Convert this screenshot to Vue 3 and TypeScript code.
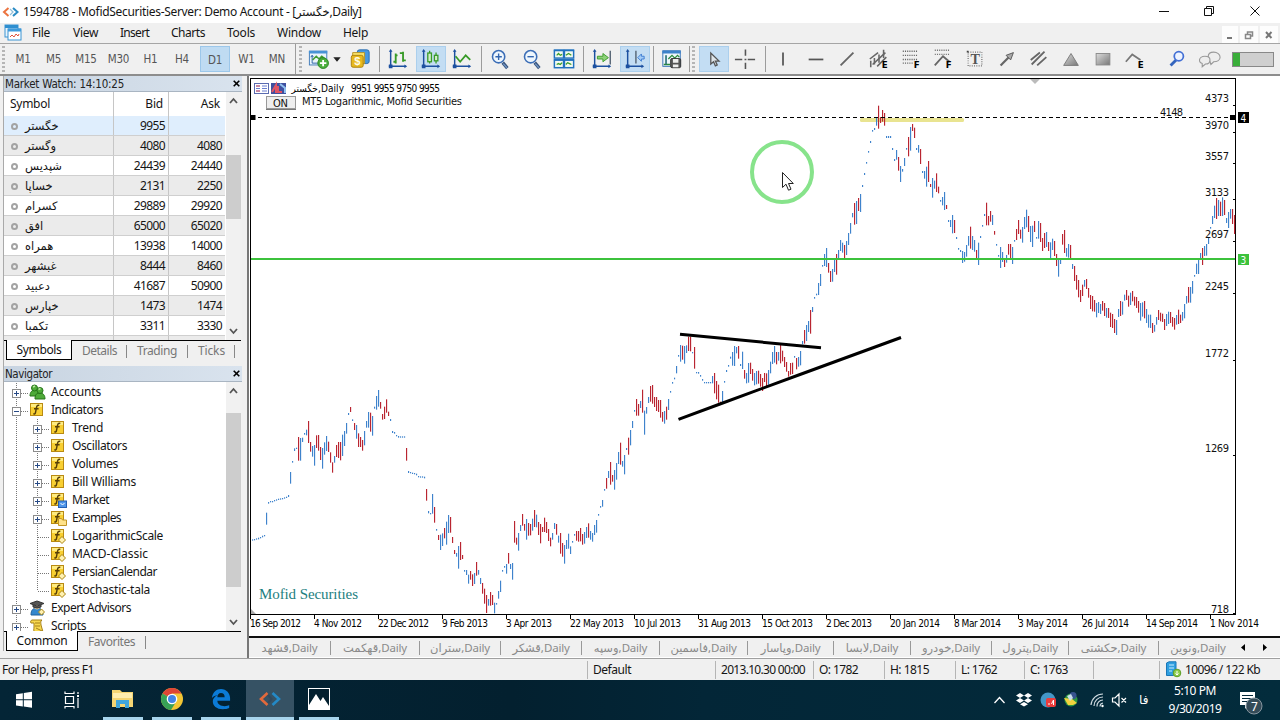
<script setup lang="ts">
interface Run { x: number; y: number; bars: string }
interface Bar { x: number; y: number; h: number; up: boolean }

// Adjusts letter spacing so that a label takes the given width in pixels.
const vFit = {
  mounted(el: HTMLElement, binding: { value: number }) {
    const n = (el.textContent || '').length
    if (!binding.value || !n) return
    const w = el.getBoundingClientRect().width
    el.style.letterSpacing = ((binding.value - w) / n).toFixed(3) + 'px'
  },
}

// Daily bars, one every 2px; heights are in thirds of a pixel below each run's y.
const runs: Run[] = [
  { x: 252, y: 380, bars: 'b478-482 b477-481 b475-479 b473-478 b471-475 b467-472 b465-469 b398-434 b366-371 b363-367 b363-367 b360-364 b358-362 b356-360 b355-359 b354-358 b352-356 b350-354 b345-351 b276-311 b243-248 b205-213 b203-207 r171-242 b174-242 b173-186 b159-164 b149-166 r123-189 r186-215 b198-230 b195-257 r166-204 r165-212 r201-240 b204-266 b187-224 b168-213 r185-216 r217-248 r247-278 b228-248 r195-231 r186-234 r186-241 b164-228 b153-198 b129-161 b99-105 r81-96 b118-123 r129-150 b135-176 r160-201 r171-201 r180-212 b153-196 b123-143 b96-143 r98-155 b108-167 b80-86 b48-89 b30-80 r66-86 r102-119 r80-117 r58-98 r95-108 b117-123 b153-159 b156-161 b165-169 b168-173 b169-173 b169-173 b169-173 r204-242 b273-279 b276-280 b278-282 b279-283 b281-286 b288-292 b289-293 b289-293 b290-295 r327-362 b393-400 b399-403 b342-401 r381-428 b447-452 r465-480 b464-510 b460-498 r444-475 b425-494 b405-459 r411-458 r471-489 r510-522 b519-530 b498-566 r486-540 r525-537 b570-575 b570-585 b584-611 r573-599 r583-618 b579-612 r546-587 b570-584 b594-612 r609-641 r626-671 r645-699 b657-677 r636-677 r645-675 b668-700 b669-674 b633-656 b602-636 b570-575 b558-563' },
  { x: 506, y: 380, bars: 'b552-581 r519-551 b552-567 b549-599 r423-488 r473-494 b459-512 b435-453 r402-437 r432-452 b417-479 r429-467 r432-466 b416-452 r390-441 b404-442 r426-465 r432-490 r441-456 r413-456 r426-459 r447-483 r473-499 b459-479 b429-447 r432-464 b467-488 r459-521 r489-530 b495-551 b480-507 b461-506 b499-522 b483-488 b462-467 r453-482 r453-485 r444-484 r462-494 b456-491 b441-474 r430-473 b453-479 b459-485 b435-465 b420-458 b402-407 b378-383 b360-380 b327-332 r294-326 b273-294 r246-314 r285-305 b270-329 b249-299 b216-252 r188-254 b243-260 b225-283 b204-210 r173-224 b150-196 b123-144 b90-95 r57-107 r72-107 b63-84 r29-98 b92-164 b81-101 b51-69 r18-65 r15-71 r51-81 r51-93 r60-96 r60-113 r96-125 b93-131 r80-119 b57-90 b33-38' },
  { x: 672, y: 230, bars: 'b456-461 b443-448 b408-430 b375-380 b345-395 r347-389 b348-401 b346-369 r320-363 r320-364 b366-370 r351-416 b426-430 b426-431 b435-440 b447-452 b456-460 b456-460 b456-460 b456-460 b438-460 r429-490 r453-508 r464-518 r515-521 b483-517 b453-458 b420-426 b405-410 b380-386 b366-407 b348-408 b351-370 r348-386 b402-408 b365-417 r420-446 b429-460 b399-458 r398-432 r417-452 b429-466 b423-463 r422-461 r432-470 r444-483 r429-456 r430-468 b420-464 b395-430 b366-402 b348-398 r366-403 b366-392 r342-400 r362-394 r381-411 r396-425 r423-440 r399-434 r398-432 b378-383 r384-418 b381-410 b363-406 b333-343 r300-341 b285-333 b273-306 r240-311 b231-246 b201-206 b191-196 b159-195 b132-168 b105-110 b72-108 b54-111 r99-128 r123-156 b117-155 b90-126 r72-134 b60-89' },
  { x: 840, y: 90, bars: 'b450-483 b458-488 r465-507 b453-495 b429-465 b399-431 b369-382 r339-404 b333-402 r324-363 b312-366 b285-291 b249-255 b216-221 b183-188 b153-159 b120-125 b114-120 b83-107 r47-116 r81-99 r60-95 r69-107 b138-144 b138-144 b138-144 b174-180 b207-213 b180-209 r201-242 b228-276 b237-245 b204-228 b174-179 r141-199 b111-182 r102-123 r113-144 b174-180 b165-188 r177-222 b243-249 b243-266 b230-290 r213-276 r282-291 b264-323 b272-296 r250-306 r290-310 b330-335 b321-346 b306-360 r345-357 b390-396 b390-411 b375-430 r390-429 b441-447 b474-479 b480-486 b483-519 b486-515 b465-500 b438-467 r410-476 b438-480 b450-485 r480-506 b458-525 b438-444 b405-410 b372-378 r338-406 r378-406 r363-395 b375-405 r423-434 b462-467 b495-500 b471-534 b486-516 r507-531 b495-518 r462-494 r462-505 b471-522 b450-455 r417-450 r390-432 r419-446 b411-458 b381-417 b359-412 r378-426 b408-456 b407-471 r393-426 b441-446 b393-446' },
  { x: 1040, y: 90, bars: 'r399-456 r444-483 r429-474 b426-471 r456-483 b457-506 b446-480 r453-498 r492-528 b507-560 b509-522 r432-464 r420-489 b474-500 b462-503 r465-507 b522-537 r528-573 r555-599 r570-622 r600-636 r584-618 b570-590 r567-597 r594-623 r615-657 r618-664 r630-665 b639-682 b636-669 b642-672 r633-662 r639-678 b654-683 r654-684 r668-711 r672-714 r687-729 b690-735 b657-681 r633-678 b635-674 b614-632 r600-630 r617-650 b608-645 r603-634 r620-647 r621-654 r633-668 b639-692 b637-680 r633-685 b657-699 b674-713 b674-714 r699-729 b705-725 b681-704 r660-690 r668-694 r671-696 r687-720 b672-708 b665-702 r666-699 r681-710 r684-719 b675-704 r659-702 r674-699 b666-692 b642-685 b618-641 r591-638 b591-638 b573-611 b555-560 b521-552 b507-552 b489-507 r474-525 b468-498 b462-497 b443-462 b411-416 b378-402 b347-384 r324-387 b330-378 r335-378 b322-378 r330-375 b384-399 b366-414 b357-386 r357-402 r375-432' },
]
const bars: Bar[] = runs.flatMap((run) =>
  run.bars.split(' ').map((code, i) => {
    const [top, bottom] = code.slice(1).split('-').map(Number)
    return { x: run.x + 2 * i, y: run.y + top / 3, h: (bottom - top) / 3, up: code[0] === 'b' }
  }),
)

const dates: [number, string, number][] = [
  [250, '16 Sep 2012', 51], [314, '4 Nov 2012', 48], [378, '22 Dec 2012', 51], [442, '9 Feb 2013', 46],
  [506, '3 Apr 2013', 46], [570, '22 May 2013', 54], [634, '10 Jul 2013', 47], [698, '31 Aug 2013', 53],
  [762, '15 Oct 2013', 51], [826, '2 Dec 2013', 46], [890, '20 Jan 2014', 50], [954, '8 Mar 2014', 47],
  [1018, '3 May 2014', 50], [1082, '26 Jul 2014', 47], [1146, '14 Sep 2014', 52], [1210, '1 Nov 2014', 49],
]
const prices: [number, string][] = [
  [98, '4373'], [125, '3970'], [156, '3557'], [192, '3133'], [234, '2697'], [286, '2245'], [353, '1772'], [448, '1269'], [609, '718'],
]

const menus: [string, number, number][] = [
  ['File', 18, 40], ['View', 25, 47], ['Insert', 29, 51], ['Charts', 34, 56], ['Tools', 28, 50], ['Window', 44, 66], ['Help', 25, 50],
]
const frames: [string, number][] = [
  ['M1', 30], ['M5', 31], ['M15', 34], ['M30', 31], ['H1', 33], ['H4', 30], ['D1', 30], ['W1', 31], ['MN', 30],
]

interface Tool { k: string; w: number; on?: boolean }
const tools: Tool[] = [
  { k: 'newchart', w: 28 }, { k: 'drop', w: 8 }, { k: 'money', w: 38 }, { k: '|', w: 1 },
  { k: 'bars', w: 36 }, { k: 'candles', w: 30, on: true }, { k: 'line', w: 32 }, { k: '', w: 3 }, { k: '|', w: 1 },
  { k: 'zoomin', w: 35 }, { k: 'zoomout', w: 30 }, { k: 'tile', w: 34 }, { k: '', w: 2 }, { k: '|', w: 1 },
  { k: 'scroll', w: 36 }, { k: 'shift', w: 30, on: true }, { k: '', w: 3 }, { k: '|', w: 1 },
  { k: 'template', w: 35 }, { k: '|', w: 1 }, { k: ':', w: 8 }, { k: '', w: 1 },
  { k: 'cursor', w: 30, on: true }, { k: 'cross', w: 32 }, { k: '', w: 4 }, { k: '|', w: 1 },
  { k: 'vline', w: 34 }, { k: 'hline', w: 31 }, { k: 'trend', w: 32 }, { k: 'channel', w: 32 }, { k: 'fibo', w: 32 },
  { k: 'fan', w: 32 }, { k: 'text', w: 32 }, { k: 'arrow', w: 32 }, { k: 'lines', w: 31 }, { k: 'tri', w: 33 },
  { k: 'rect', w: 32 }, { k: 'elliott', w: 32 }, { k: '', w: 8 }, { k: 'search', w: 36 }, { k: 'chat', w: 30 },
]

const axis = '<g fill="none" stroke="#1c50a0" stroke-width="1.6"><path d="M4 3v17M2 20h18"/></g><path d="M4 1l2 3h-4zM22 20l-3-2v4zM2 18h4v4h-4z" fill="#1c50a0"/>'
const lens = '<path d="M15 16l5 6" stroke="#39537b" stroke-width="3.6"/><path d="M15.500 17l4 4.500" stroke="#7196c5" stroke-width="1.500"/><circle cx="10.500" cy="9.500" r="6.700" fill="#eef6fd" stroke="#3c6eb7" stroke-width="1.700"/>'
const letter = (c: string) => `<text x="15" y="21.500" font-family="DejaVu Sans" font-weight="700" font-size="9.500" fill="#000">${c}</text>`
const icons: Record<string, string> = {
  newchart: '<rect x="1.500" y="3.500" width="19" height="15" fill="#eaf4fb" stroke="#3c78b8"/><path d="M1 3h20v3H1z" fill="#4793d5"/><path d="M4.500 8v8.500H15M3 10l1.500-2 1.500 2" fill="none" stroke="#235ca2"/><path d="M5 13l4-4 3 3 3-3 4 3" fill="none" stroke="#3e9a30" stroke-width="1.600"/><circle cx="16.500" cy="16.500" r="5.800" fill="#4cae3d" stroke="#26861f"/><path d="M16.500 13v7M13 16.500h7" stroke="#fff" stroke-width="2"/>',
  drop: '<path d="M8 10h8l-4 5z" fill="#222"/>',
  money: '<rect x="9" y="2" width="13" height="15" rx="2.500" fill="#4799e1" stroke="#276aac"/><path d="M4 5h13v12H4z" fill="#fbe46a" stroke="#b69220"/><rect x="2.500" y="8" width="13" height="13" rx="2" fill="#e7b91f" stroke="#a77d0b"/><text x="5.800" y="19" font-family="Liberation Sans" font-weight="700" font-size="12" fill="#fffbe5">$</text>',
  bars: axis + '<path d="M9.500 6v11M7 15h2.500M9.500 8h2M17.500 4v11M14 5.500h3.500M17.500 13.500h3" fill="none" stroke="#379a26" stroke-width="2"/>',
  candles: axis + '<g stroke="#379a26" stroke-width="1.400" fill="#d3edc9"><path d="M10.500 3v14M17.500 5v12"/><rect x="8.500" y="5.500" width="4" height="9.500"/><rect x="15.700" y="8" width="3.800" height="6"/></g>',
  line: axis + '<path d="M5 9l5 6 6-7 5 5" fill="none" stroke="#379a26" stroke-width="1.900"/>',
  zoomin: lens + '<path d="M10.500 6v7M7 9.500h7" stroke="#3265af" stroke-width="1.500"/>',
  zoomout: lens + '<path d="M7 9.500h7" stroke="#3265af" stroke-width="1.500"/>',
  tile: '<g fill="#f2faf1" stroke="#2172bf" stroke-width="1.600"><rect x="1.500" y="2.500" width="10" height="8.500"/><rect x="12.500" y="2.500" width="10" height="8.500"/><rect x="1.500" y="13" width="10" height="8.500"/><rect x="12.500" y="13" width="10" height="8.500"/></g><path d="M1 2.500h22M1 13h22" stroke="#2172bf" stroke-width="2"/><path d="M4 8l2-2 2 2 2-1M14 8l3-2 3 2M4 18l2-1 2 1 2-2M14 18l2-2 2 1 2 1" fill="none" stroke="#399e2c" stroke-width="1.400"/>',
  scroll: axis + '<path d="M21 3v15" stroke="#526170" stroke-width="1.500"/><path d="M7 9h6V6l6 4.500-6 4.500v-3H7z" fill="#8dd078" stroke="#3a9b2a"/>',
  shift: axis + '<path d="M13 3v14" stroke="#526170" stroke-width="1.500"/><path d="M22 9h-3V6.500L15 10.500l4 4V12h3z" fill="#a3cdf7" stroke="#3b79d0"/>',
  template: '<rect x="2" y="3" width="19" height="17" fill="#eff6fc" stroke="#2f6fb5"/><path d="M1.500 3h20v3h-20z" fill="#3c82ca"/><path d="M5.500 8v10M3 18h7M8 12l4-4 3 3 3-3 2 2" fill="none" stroke="#2b8b3b" stroke-width="1.400"/><path d="M5.500 8v10" stroke="#235ca2"/><rect x="10.500" y="11.500" width="11" height="10" rx="1.500" fill="#555" stroke="#333"/><path d="M13 12h6v4h-6zM13 18h6v3h-6z" fill="#eee"/>',
  cursor: '<path d="M8.500 5.500v12l3-2.500 2 4.500 2-1-2-4.300h4z" fill="#dfe5e9" stroke="#555" stroke-width="1.400"/>',
  cross: '<path d="M1 12.500h8M15 12.500h8M12.500 1.500v7M12.500 16v7M11.500 12.500h2" stroke="#555" stroke-width="1.700"/>',
  vline: '<path d="M12 5v14" stroke="#555" stroke-width="1.900"/>',
  hline: '<path d="M4 12.500h16" stroke="#555" stroke-width="1.900"/>',
  trend: '<path d="M5 19L19 5" stroke="#666" stroke-width="2"/>',
  channel: '<g stroke="#666" stroke-width="1.700"><path d="M2 12l9-7M5 18L19 5M10 20l10-10"/><path d="M3 14v7M7 11v7M12 7v9M17 2v9"/></g>' + letter('E'),
  fibo: '<path d="M3 3.500h16M3 8h16M3 12.500h16M3 16.500h12" stroke="#666" stroke-width="1.500" stroke-dasharray="1.200 1.200"/>' + letter('F'),
  fan: '<path d="M3 2.500h16M3 7h16" stroke="#777" stroke-width="1.500" stroke-dasharray="1.200 1.200"/><path d="M3 19L12 9l7 6" fill="none" stroke="#666" stroke-width="2"/>' + letter('F'),
  text: '<rect x="4.500" y="4.500" width="15" height="15" fill="none" stroke="#666" stroke-width="1.200" stroke-dasharray="1 1.500"/><path d="M3 3h2v2H3z" fill="#444"/><text x="7" y="17.500" font-family="Liberation Serif" font-weight="700" font-size="15.500" fill="#555">T</text>',
  arrow: '<path d="M5 19l10-10" stroke="#666" stroke-width="2.400"/><path d="M11 8l8-3-3 8z" fill="#aaa" stroke="#555"/>',
  lines: '<path d="M3 13l10-8M4 18L18 4M10 19l10-9" stroke="#666" stroke-width="2"/>',
  tri: '<path d="M4 19l8-13 8 13z" fill="url(#steel)" stroke="#777"/>',
  rect: '<rect x="4.500" y="6" width="15" height="12.500" fill="url(#steel)" stroke="#888"/>',
  elliott: '<path d="M2 15l7-8 9 6" fill="none" stroke="#777" stroke-width="1.900"/>' + letter('E'),
  search: '<path d="M5 19l6-6" stroke="#3565bd" stroke-width="3.200"/><circle cx="14" cy="9" r="5" fill="#edf3ff" stroke="#426fd5" stroke-width="1.900"/>',
  chat: '<g fill="#ededed" stroke="#999" stroke-width="1.200"><path d="M12 15l1 3 3-3c4 0 7-2 7-5s-3-5.500-7-5.500-6 2-6 5 1 4.500 2 5.500z"/><path d="M6.500 9c3 0 5.500 1.500 5.500 4s-2 4.500-5 4.500l-3.500 3v-3.500c-2-.8-3-2-3-3.500C.5 11 3 9 6.500 9z"/></g>',
}

const symbols: [string, string, string][] = [
  ['خگستر', '9955', ''], ['وگستر', '4080', '4080'], ['شپدیس', '24439', '24440'], ['خساپا', '2131', '2250'],
  ['کسرام', '29889', '29920'], ['افق', '65000', '65020'], ['همراه', '13938', '14000'], ['غبشهر', '8444', '8460'],
  ['دعبید', '41687', '50900'], ['خپارس', '1473', '1474'], ['تکمبا', '3311', '3330'],
]

interface Node { t: string; w: number; lv: number; box: string; icon: string }
const tree: Node[] = [
  { t: 'Accounts', w: 50, lv: 0, box: '+', icon: 'people' },
  { t: 'Indicators', w: 52, lv: 0, box: '-', icon: 'f' },
  { t: 'Trend', w: 31, lv: 1, box: '+', icon: 'f' },
  { t: 'Oscillators', w: 55, lv: 1, box: '+', icon: 'f' },
  { t: 'Volumes', w: 46, lv: 1, box: '+', icon: 'f' },
  { t: 'Bill Williams', w: 64, lv: 1, box: '+', icon: 'f' },
  { t: 'Market', w: 37, lv: 1, box: '+', icon: 'fm' },
  { t: 'Examples', w: 49, lv: 1, box: '+', icon: 'fe' },
  { t: 'LogarithmicScale', w: 91, lv: 1, box: '', icon: 'fd' },
  { t: 'MACD-Classic', w: 76, lv: 1, box: '', icon: 'fd' },
  { t: 'PersianCalendar', w: 85, lv: 1, box: '', icon: 'fd' },
  { t: 'Stochastic-tala', w: 78, lv: 1, box: '', icon: 'fd' },
  { t: 'Expert Advisors', w: 80, lv: 0, box: '+', icon: 'expert' },
  { t: 'Scripts', w: 35, lv: 0, box: '+', icon: 'script' },
]
const fBase = '<rect x="1.500" y="1.500" width="12" height="12" fill="#f8cf32" stroke="#b98a12"/><path d="M2 2h11v3H2z" fill="#ffec81"/><path d="M10.300 3.500c-2-.8-2.600.7-2.900 2.500l-.9 4.500c-.3 1.400-1 1.800-2.200 1.200M5 6.700h4.600" fill="none" stroke="#573f08" stroke-width="1.400"/>'
const treeIcons: Record<string, string> = {
  f: fBase,
  fm: fBase + '<rect x="8.500" y="9" width="8" height="6.500" fill="#5097ea" stroke="#2460b4"/><path d="M10.500 11l2 2 2-2" fill="none" stroke="#fff"/>',
  fe: fBase + '<path d="M8.500 8.500h3l1 1.500h4v5.500h-8z" fill="#ffe28a" stroke="#c29525"/>',
  fd: fBase + '<path d="M12 8.500l3.500 3.500-3.500 3.500L8.500 12z" fill="#fff1b2" stroke="#ab8510"/>',
  people: '<g fill="#4eaa39" stroke="#267519"><path d="M1 12c0-4 2-6 5-6s5 2 5 6z"/><circle cx="5.500" cy="4" r="3"/><path d="M6 15c0-5 2-6 5-6s5 2 5 6z"/><circle cx="11" cy="6.500" r="3"/></g><path d="M4 3l2-1M9.500 5.500l2-1" stroke="#b7e79f" stroke-width="1.500"/>',
  expert: '<path d="M2 15c0-5 2-7 6-7s6 2 6 7z" fill="#3487ce" stroke="#20609d"/><circle cx="8" cy="6.500" r="3" fill="#dcc193"/><path d="M1 3.500L8 1l7 2.500L8 6zM4 5v2l4 1 4-1V5" fill="#555" stroke="#333"/><path d="M12.500 9l3 3-3 3-3-3z" fill="#fff1b2" stroke="#ab8510"/>',
  script: '<path d="M3 2h10c-2 1-1 3-1 5l2 7H6c-2-1-1-3-1-5V5H2c-1-1 0-3 1-3z" fill="#f8d84e" stroke="#a58019"/><path d="M6 5h5M6 8h5M7 10l6 3" stroke="#a58019"/>',
}

const chartTabs: [string, number][] = [
  ['قشهد', 82], ['قهکمت', 89], ['ستران', 81], ['قشکر', 81], ['وسپه', 78], ['فاسمین', 88], ['وپاسار', 86], ['لابسا', 77],
  ['خودرو', 81], ['پترول', 77], ['حکشتی', 90], ['ونوین', 78],
]
const status: [string, number, number][] = [
  ['Default', 128, 38], ['2013.10.30 00:00', 98, 84], ['O: 1782', 71, 39], ['H: 1815', 71, 39], ['L: 1762', 69, 36], ['C: 1763', 69, 38], ['', 66, 0],
]
</script>

<template>
  <div class="desk">
    <svg class="defs" width="0" height="0"><defs><linearGradient id="steel" x1="0" y1="0" x2="1" y2="1"><stop offset="0" stop-color="#ddd" /><stop offset="1" stop-color="#777" /></linearGradient></defs></svg>
    <header class="title">
      <svg class="brand" width="18" height="16" viewBox="0 0 18 16" fill="none" stroke-width="2"><path d="M6.500 4L2 8l4.500 4" stroke="#ec7440" /><path d="M11 4l4.500 4-4.500 4" stroke="#2a8bc4" /><path d="M8 5l3 3-3 3" stroke="#91bfd9" stroke-width="1.200" /></svg>
      <span class="cap"><span v-fit="273">1594788 - MofidSecurities-Server: Demo Account - [</span><span class="fa">خگستر</span><span v-fit="32">,Daily]</span></span>
      <svg class="winbtns" width="110" height="20" viewBox="0 0 110 20" fill="none" stroke="#111"><path d="M5 9.500h10M50.500 6.500h7v7h-7zM52.500 6.500v-2h7v7h-2M96.500 4.500l9 9M105.500 4.500l-9 9" /></svg>
    </header>
    <nav class="menu">
      <svg class="docicon" width="18" height="18" viewBox="0 0 18 18"><rect x="1" y="1" width="13" height="12" fill="#e8f4fc" stroke="#3b94d2" /><path d="M1 1h13v3H1z" fill="#2e8fd0" /><rect x="4" y="5" width="13" height="11" fill="#fff" stroke="#3b94d2" /><path d="M4 4.500h13v3H4z" fill="#3f9bdb" /><path d="M6 13l2-2 2 2 2-3 2 2 1-2" fill="none" stroke="#e0523a" /></svg>
      <span v-for="m in menus" :key="m[0]" class="mi" :style="{ width: m[2] + 'px' }"><span v-fit="m[1]">{{ m[0] }}</span></span>
      <svg class="mdibtns" width="56" height="17" viewBox="0 0 56 17"><path d="M0 0h16v17H0zM18 0h18v17H18zM38 0h18v17H38z" fill="#fdfdfd" /><path d="M5 12h5" stroke="#777" stroke-width="2" /><path d="M23.500 8.500h5v4h-5zM25.500 8v-2h5v4h-2" fill="none" stroke="#888" stroke-width="1.500" /><path d="M44 6l5.500 6M49.500 6l-5.500 6" stroke="#777" stroke-width="2" /></svg>
    </nav>
    <div class="toolbar">
      <i class="grip first"></i>
      <span v-for="f in frames" :key="f[0]" class="tf" :class="{ on: f[0] === 'D1' }" :style="{ width: f[1] + 'px' }"><b>{{ f[0] }}</b></span>
      <i class="sep end"></i><i class="grip"></i>
      <template v-for="(t, i) in tools" :key="i">
        <i v-if="t.k === '|'" class="sep"></i>
        <i v-else-if="t.k === ':'" class="grip mid"></i>
        <span v-else class="tool" :class="{ on: t.on }" :style="{ width: t.w + 'px' }"><svg v-if="t.k" width="22" height="22" viewBox="0 0 24 24" v-html="icons[t.k]"></svg></span>
      </template>
      <span class="meter"><i></i></span>
    </div>

    <main class="work">
      <aside class="side">
        <section class="panel watch">
          <h2><span v-fit="119">Market Watch: 14:10:25</span><svg width="7" height="7" viewBox="0 0 7 7"><path d="M.7.7l5.600 5.600M6.300.7L.7 6.300" stroke="#000" stroke-width="1.600" /></svg></h2>
          <div class="body">
            <div class="table">
              <div class="tr th"><span class="c1"><span v-fit="40">Symbol</span></span><span class="c2">Bid</span><span class="c3">Ask</span></div>
              <div v-for="(s, i) in symbols" :key="s[0]" class="tr" :class="{ odd: i % 2, sel: i === 0 }">
                <span class="c1"><i class="dot"></i><span class="fa">{{ s[0] }}</span></span><span class="c2">{{ s[1] }}</span><span class="c3">{{ s[2] }}</span>
              </div>
              <div class="tr odd"><span class="c1"></span><span class="c2"></span><span class="c3"></span></div>
            </div>
            <div class="scroll"><svg viewBox="0 0 15 10"><path d="M4 7l3.500-4L11 7" /></svg><i class="thumb t1"></i><svg viewBox="0 0 15 10"><path d="M4 3l3.500 4L11 3" /></svg></div>
          </div>
          <div class="tabs"><span class="cur s"><span v-fit="45">Symbols</span></span><span class="tab a"><span v-fit="35">Details</span></span><span class="tab b"><span v-fit="40">Trading</span></span><span class="tab c"><span v-fit="27">Ticks</span></span></div>
        </section>
        <section class="panel nav">
          <h2><span v-fit="47">Navigator</span><svg width="7" height="7" viewBox="0 0 7 7"><path d="M.7.7l5.600 5.600M6.300.7L.7 6.300" stroke="#000" stroke-width="1.600" /></svg></h2>
          <div class="body">
            <div class="tree">
              <div v-for="(n, i) in tree" :key="n.t" class="node">
                <svg class="rail" :width="n.lv ? 46 : 25" height="18" :viewBox="n.lv ? '0 0 46 18' : '0 0 25 18'">
                  <g fill="none" stroke="#777" stroke-dasharray="1 1"><path d="M12.500 0v18" /><path v-if="n.lv" :d="i === 11 ? 'M33.500 0v10' : 'M33.500 0v18'" /><path :d="n.lv ? 'M34 10.500h11' : 'M13 10.500h11'" /></g>
                  <g v-if="n.box" fill="none"><rect :x="n.lv ? 29.5 : 8.5" y="6.500" width="8" height="8" fill="#fff" stroke="#8c8c8c" /><path :d="n.lv ? 'M31 10.500h5' : 'M10 10.500h5'" stroke="#274a86" /><path v-if="n.box === '+'" :d="n.lv ? 'M33.500 8v5' : 'M12.500 8v5'" stroke="#274a86" /></g>
                </svg>
                <svg class="ni" width="18" height="17" viewBox="0 0 18 17" v-html="treeIcons[n.icon]"></svg>
                <span v-fit="n.w">{{ n.t }}</span>
              </div>
            </div>
            <div class="scroll"><svg viewBox="0 0 15 10"><path d="M4 7l3.500-4L11 7" /></svg><i class="thumb t2"></i><svg viewBox="0 0 15 10"><path d="M4 3l3.500 4L11 3" /></svg></div>
          </div>
          <div class="tabs"><span class="cur n"><span v-fit="51">Common</span></span><span class="tab f"><span v-fit="47">Favorites</span></span></div>
        </section>
      </aside>

      <section class="chartwin">
        <svg class="chart" width="1031" height="559" viewBox="249 77 1031 559">
          <rect x="249" y="77" width="1031" height="559" fill="#fff" />
          <g shape-rendering="crispEdges" fill="#000">
            <rect x="250" y="78" width="986" height="1" /><rect x="250" y="78" width="1" height="536" /><rect x="1235" y="78" width="1" height="537" /><rect x="250" y="614" width="986" height="1" />
            <rect v-for="d in dates" :key="'t' + d[0]" :x="d[0]" y="614" width="1" height="5" />
            <rect v-for="p in prices" :key="'p' + p[0]" x="1233" :y="p[0] === 609 ? 613 : p[0] + 7" width="3" height="1" />
          </g>
          <rect x="860" y="118" width="104" height="4" rx="1.500" fill="#e9e491" />
          <path d="M1030 79h10l-5 5z" fill="#bbb" /><path d="M251 609l5 5h-5z" fill="#aaa" />
          <rect v-for="b in bars" :key="b.x" :x="b.x" :y="b.y" width="1.150" :height="b.h" :fill="b.up ? '#3f83cc' : '#b92531'" />
          <path d="M251 117.500h984" stroke="#000" stroke-dasharray="4 3" />
          <rect x="251" y="258" width="984" height="2" fill="#3cc23c" />
          <path d="M250.500 115h5v5h-5zM1230 115h5v5h-5z" />
          <rect x="1238" y="112" width="11" height="11" /><rect x="1238" y="254" width="11" height="11" fill="#3cc23c" />
          <g class="tah" font-size="10" fill="#fff"><text x="1240.500" y="121.500">4</text><text x="1240.500" y="263.500">3</text></g>
          <path d="M680 334.300L821 347.800M678.500 419.300L720 404 800 374.500 901 337.500" fill="none" stroke="#000" stroke-width="3" stroke-linejoin="round" />
          <circle cx="782" cy="172" r="30" fill="none" stroke="#87e38b" stroke-width="4" />
          <path d="M782.500 172.500v15l3.500-3.300 2.500 6 2.500-1-2.500-5.700h4.800z" fill="#fff" stroke="#222" />
          <g class="tah" font-size="11" fill="#111">
            <text v-for="p in prices" :key="p[1]" :x="p[1] === '718' ? 1211 : 1205" :y="p[0] + 4" :textLength="p[1] === '718' ? 18 : 24">{{ p[1] }}</text>
            <text x="1160" y="115.500" textLength="23">4148</text>
          </g>
          <g class="tah" font-size="10" fill="#000">
            <text v-for="d in dates" :key="d[1]" :x="d[0]" y="627" :textLength="d[2]">{{ d[1] }}</text>
            <text x="291.500" y="92" font-size="10">خگستر</text>
            <text x="318" y="92" textLength="26">,Daily</text><text x="351" y="92" textLength="89">9951 9955 9750 9955</text>
          </g>
          <rect x="266.500" y="96.500" width="29" height="12" fill="#eee" stroke="#999" />
          <path d="M266 109.500h30" stroke="#777" />
          <g class="tah" font-size="11" fill="#111"><text x="273" y="107" textLength="15">ON</text><text x="302" y="105" textLength="160">MT5 Logarithmic, Mofid Securities</text></g>
          <text x="259" y="599" font-family="Liberation Serif, serif" font-size="15" fill="#1d8080" textLength="99">Mofid Securities</text>
          <g><rect x="254.500" y="83.500" width="14" height="10" fill="#fff" stroke="#5a6bb0" /><path d="M256 86h4M262 86h5M256 88.500h4M262 88.500h5M256 91h4M262 91h5" stroke="#6a7fd0" /><path d="M256 86h4M256 91h4" stroke="#d85060" /><rect x="271" y="83" width="15" height="11" fill="#3f4f9f" /><path d="M272 92l4-7v8M278 86v6h4" fill="none" stroke="#e05565" stroke-width="2" /><path d="M280 84l5 4v5" fill="none" stroke="#91c0ef" stroke-width="2" /></g>
        </svg>
        <div class="ctabs">
          <span v-for="c in chartTabs" :key="c[0]" class="ct" :style="{ width: c[1] + 'px' }">{{ c[0] }},Daily</span>
          <svg class="arr" width="36" height="10" viewBox="0 0 36 10"><path d="M8 1v7L4 4.500zM26 1v7l4-3.500z" /></svg>
        </div>
      </section>
    </main>

    <footer class="status">
      <span class="help"><span v-fit="92">For Help, press F1</span></span>
      <span v-for="s in status" :key="s[0]" class="st" :style="{ width: s[1] + 'px' }"><span v-fit="s[2]">{{ s[0] }}</span></span>
      <span class="st net"><svg width="17" height="17" viewBox="0 0 17 17"><path d="M1.500 2L4 .8h7v12L8 14.500H1.500z" fill="#2f9fe0" stroke="#1b77b8" /><path d="M4 4h5M4 7h5M4 10h3" stroke="#c9ebff" /><circle cx="12" cy="12" r="3.800" fill="#8fce4c" stroke="#5c9d25" /><path d="M12 10v3.500M10.500 12.500l1.500 1.500 1.500-1.500" stroke="#fff" fill="none" /></svg><span v-fit="75">10096 / 122 Kb</span></span>
    </footer>

    <footer class="task">
      <span class="app w1"><svg width="18" height="18" viewBox="0 0 18 18" fill="#fff"><path d="M1 3.200l6.800-1v6.100H1zM8.800 2L17 .8v7.500H8.800zM1 9.300h6.800v6.200l-6.800-1zM8.800 9.300H17v7.500l-8.200-1.200z" /></svg></span>
      <span class="app w2"><svg width="18" height="18" viewBox="0 0 18 18" fill="none" stroke="#fff" stroke-width="1.200"><path d="M2 .5v2h9v-2M2 17.500v-2h9v2M2.500 5.500h8v7h-8zM15 1v2M15 7v10" /><path d="M14 5h2" stroke-width="2" /></svg></span>
      <span class="app run"><svg width="24" height="22" viewBox="0 0 24 22"><path d="M1 2h8l2 2h11v15H1z" fill="#f5d573" /><path d="M2 5h19v5H2z" fill="#ffedae" /><path d="M5 20v-8h13v8h-4v-4H9v4z" fill="#40a6dd" /></svg></span>
      <span class="app run"><svg width="24" height="24" viewBox="0 0 24 24"><circle cx="12" cy="12" r="11" fill="#f2c635" /><path d="M12 12L2.500 6.500A11 11 0 0 1 21.500 6.500H12z" fill="#de4536" /><path d="M2.500 6.500A11 11 0 0 0 11 23l5.500-9L12 12z" fill="#38a156" /><circle cx="12" cy="12" r="5.300" fill="#fff" /><circle cx="12" cy="12" r="4" fill="#4284e7" /></svg></span>
      <span class="app run"><svg width="20" height="22" viewBox="0 0 22 24"><path d="M1 11C2 4 6 1 11 1c6 0 10 5 10 10v3H7c0 4 4 6 8 6 2 0 4-.7 5-1.300V22c-2 1-4 1.300-7 1.300C6 23.300 2 19 2 15c0-4 3-6 5-7-2 0-4 1-6 3zm6-1h8c0-3-1.500-4.500-4-4.500S7 7.500 7 10z" fill="#0b7bd7" /></svg></span>
      <span class="app run act"><svg width="24" height="20" viewBox="0 0 24 20" fill="none" stroke-width="2.600"><path d="M9.500 4L3 10l6.500 6" stroke="#e1693c" /><path d="M14.500 4l6.500 6-6.500 6" stroke="#2489c6" /><path d="M10 6l3.500 4-3.500 4" stroke="#30495e" stroke-width="2" /></svg></span>
      <span class="app run last"><svg width="22" height="22" viewBox="0 0 22 22"><rect x=".5" y=".5" width="21" height="21" fill="#03202f" stroke="#fff" /><path d="M1 21V17L8 6l4.500 7L15 9l6 9v3z" fill="#fff" /></svg></span>
      <div class="tray">
        <svg width="190" height="24" viewBox="0 0 190 24">
          <path d="M9.500 15l5-5.500 5 5.500" fill="none" stroke="#fff" stroke-width="1.300" />
          <path d="M35 5l4 2.500-4 2.500-4-2.500zM43 5l4 2.500-4 2.500-4-2.500zM35 10l4 2.500-4 2.500-4-2.500zM43 10l4 2.500-4 2.500-4-2.500zM39 14l4 2.200-4 2.300-4-2.300z" fill="#fff" />
          <circle cx="63" cy="12" r="7.500" fill="#4496c6" /><rect x="61" y="10" width="10" height="9" rx="2" fill="#ec3c3c" /><path d="M63 16h2M66.500 16l2-4v5" stroke="#fff" fill="none" />
          <circle cx="86" cy="12" r="6.500" fill="#2e9640" /><path d="M79 10l8 1 5 4-4 2h-5z" fill="#f2d33e" /><circle cx="88" cy="7.500" r="3.500" fill="#36528f" /><path d="M82 8l4-2 2 4-3 3z" fill="#c8dfe8" />
          <g fill="none" stroke="#cfdae0" stroke-width="1.200"><path d="M106 17a12 12 0 0 1 12-11M109 18a9 9 0 0 1 9-9M112 18.500a6 6 0 0 1 6-6.500M115 18.500a3.500 3.500 0 0 1 3-3.500" /></g><circle cx="117.500" cy="18" r="1.200" fill="#fff" />
          <path d="M127.500 10h2.500l4-4v12l-4-4h-2.500zM136.500 10l4.500 4.500M141 10l-4.500 4.500" fill="none" stroke="#fff" stroke-width="1.200" />
        </svg>
        <span class="lang">فا</span>
      </div>
      <div class="clock"><span v-fit="42">5:10 PM</span><span v-fit="53">9/30/2019</span></div>
      <svg class="note" width="32" height="32" viewBox="0 0 32 32"><path d="M1 8h15v13H9l-3 4v-4H1z" fill="#fff" /><path d="M3 11.500h11M3 14.500h11M3 17.500h8" stroke="#03283a" /><circle cx="15" cy="22" r="8" fill="#344b58" stroke="#8796a0" /><text x="12" y="26.500" font-family="Noto Sans" font-size="12" fill="#fff">7</text></svg>
    </footer>
  </div>
</template>

<style>
body { margin: 0; }
</style>
<style scoped>
.desk { width: 1280px; height: 720px; overflow: hidden; background: #f0f0f0; font: 12px/16px "Noto Sans", "DejaVu Sans", sans-serif; color: #151515; display: flex; flex-direction: column; white-space: nowrap; }
.desk * { box-sizing: border-box; }
.defs { display: none; }
.desk svg { flex: none; display: block; }
.title { height: 23px; flex: none; background: #fff; display: flex; align-items: center; padding-left: 2px; }
.cap { margin-left: 3px; flex: 1; display: flex; align-items: center; height: 23px; }
.cap .fa { font-family: "DejaVu Sans", sans-serif; font-size: 11.500px; }
.winbtns { margin-right: 16px; }
.menu { height: 21px; flex: none; background: #f0f0f0; display: flex; align-items: center; padding-left: 4px; border-bottom: 1px solid #a5a5a5; }
.docicon { margin-right: 10px; }
.mi { display: flex; }
.mi:first-of-type { margin-right: 1px; }
.mdibtns { margin-left: auto; margin-right: 2px; }
.mi + .mdibtns { align-self: flex-end; }
.toolbar { height: 32px; flex: none; display: flex; align-items: center; background: #f0f0f0; border-bottom: 2px solid #8d8d8d; }
.grip { width: 3px; height: 26px; flex: none; margin: 0 3px; background: repeating-linear-gradient(#b5b5b5 0 2px, #f0f0f0 2px 4px); }
.grip.first { margin: 0 3px 0 2px; }
.grip.mid { margin: 0 3px 0 2px; }
.sep { width: 1px; height: 26px; flex: none; background: #9c9c9c; }
.sep.end { margin-left: 3px; height: 30px; }
.tf { flex: none; display: flex; justify-content: center; align-items: center; height: 26px; color: #555; font-family: "DejaVu Sans Condensed", "DejaVu Sans", sans-serif; font-stretch: condensed; font-size: 11.500px; }
.tf b { font-weight: 400; letter-spacing: -.2px; }
.tf.on { background: #bfdbf2; border: 1px solid #9cc7ea; margin: 0 1px 0 3px; }
.tf.on b { padding-top: 2px; }
.tool { flex: none; display: flex; justify-content: center; align-items: center; height: 26px; overflow: visible; }
.tool svg { margin: 0 -8px; }
.tool.on { background: #c3ddf3; border: 1px solid #abcfed; }
.meter { margin-left: 7px; width: 42px; height: 15px; background: #cfcfcf; border: 1px solid #888; flex: none; }
.meter i { display: block; width: 7px; height: 13px; background: #3aae3a; }
.work { height: 582px; flex: none; display: flex; }
.side { width: 247px; flex: none; padding: 0 4px 0 3px; }
.panel { width: 239px; border-left: 1px solid #a9a9a9; }
.panel h2 { margin: 0; height: 16px; background: linear-gradient(90deg, #c8d4e1, #d9e3ee); display: flex; align-items: center; justify-content: space-between; font: 11.500px/14px "DejaVu Sans Condensed", "DejaVu Sans", sans-serif; font-stretch: condensed; padding: 0 2px 0 1px; color: #222; border-bottom: 1px solid #a9b5c2; }
.body { display: flex; overflow: hidden; background: #fff; }
.watch .body { height: 248px; }
.table { width: 221px; overflow: hidden; }
.tr { display: flex; height: 20px; align-items: stretch; border-bottom: 1px solid #cfcfcf; line-height: 19px; }
.tr.th { height: 24px; line-height: 24px; border-bottom: 0; }
.tr.odd { background: #ebebeb; }
.tr.sel { background: #dfeefd; }
.c1 { width: 110px; border-right: 1px solid #c6c6c6; padding-left: 6px; display: flex; align-items: center; }
.c2 { width: 55px; border-right: 1px solid #c6c6c6; text-align: right; padding-right: 3px; letter-spacing: -.6px; }
.c3 { width: 56px; text-align: right; padding-right: 3px; letter-spacing: -.6px; }
.th .c2, .th .c3 { padding-right: 5px; letter-spacing: -.2px; }
.dot { width: 7px; height: 7px; border: 2px solid #a3a3a3; border-radius: 50%; margin: 1px 7px 0 1px; }
.tr .fa { font: 11.500px/18px "DejaVu Sans", sans-serif; }
.scroll { width: 16px; margin-left: 1px; background: #f1f1f1; display: flex; flex-direction: column; align-items: stretch; padding: 4px 1px 4px 0; }
.scroll svg { width: 15px; height: 10px; fill: none; stroke: #555; stroke-width: 1.800px; }
.thumb { display: block; background: #cdcdcd; }
.t1 { margin-top: 49px; height: 64px; margin-bottom: 107px; }
.t2 { margin-top: 17px; height: 174px; margin-bottom: 30px; }
.tabs { height: 20px; border-top: 1px solid #000; display: flex; color: #777; margin-right: 1px; background: #f0f0f0; }
.cur { color: #111; background: #fff; border: 1px solid #000; border-top: 0; height: 20px; display: flex; justify-content: center; align-items: center; margin-top: -1px; margin-left: 2px; }
.cur.s { width: 66px; }
.cur.n { width: 72px; }
.tab { position: relative; display: flex; align-items: center; height: 19px; padding-left: 10px; }
.tab::after { content: ""; position: absolute; right: 0; top: 4px; height: 13px; width: 1px; background: #888; }
.tab.a { width: 55px; }
.tab.b { width: 61px; }
.tab.c { width: 47px; }
.tab.f { width: 68px; }
.watch { height: 290px; }
.nav .body { height: 249px; }
.tree { width: 221px; overflow: hidden; padding-top: 1px; }
.node { height: 18px; display: flex; align-items: center; }
.rail { align-self: stretch; }
.node .ni { margin-right: 4px; }
.chartwin { flex: 1; border-left: 2px solid #777; min-width: 0; background: #fff; }
.chartwin .chart { margin-top: 1px; }
.tah { font-family: "DejaVu Sans Condensed", "DejaVu Sans", sans-serif; font-stretch: condensed; }
.ctabs { height: 21px; border-top: 2px solid #111; background: #f0f0f0; display: flex; align-items: center; color: #8a8a8a; padding-top: 1px; }
.ct { flex: none; text-align: center; font: 11.500px/14px "Noto Sans", "DejaVu Sans", sans-serif; letter-spacing: -.2px; border-right: 1px solid #999; }
.ct:nth-last-child(2) { border: 0; }
.status { height: 22px; flex: none; border-top: 1px solid #9f9f9f; display: flex; align-items: center; }
.help { width: 587px; padding-left: 2px; }
.st { flex: none; height: 18px; border-left: 1px solid #b5b5b5; padding-left: 5px; display: flex; align-items: center; }
.net { width: 118px; padding-left: 5px; gap: 3px; }
.task { height: 40px; flex: none; background: linear-gradient(90deg, #042536, #03202f 40%, #032637 55%, #032c3c); display: flex; color: #fff; }
.app { width: 40px; height: 40px; display: flex; align-items: center; justify-content: center; margin-right: 9px; }
.app.w1 { width: 48px; margin: 0; }
.app.w2 { width: 48px; margin: 0 7px 0 0; }
.app.run { border-bottom: 3px solid #a7d4ec; }
.app.act { width: 48px; background: #365264; margin: 0 5px 0 -4px; }
.tray { margin-left: auto; display: flex; align-items: center; }
.lang { font: 12px/16px "DejaVu Sans", sans-serif; width: 14px; margin-left: -36px; }
.clock { width: 60px; margin-left: 12px; display: flex; flex-direction: column; align-items: center; justify-content: center; line-height: 18px; font-size: 12px; }
.note { margin: 4px 9px 0 14px; }
</style>
